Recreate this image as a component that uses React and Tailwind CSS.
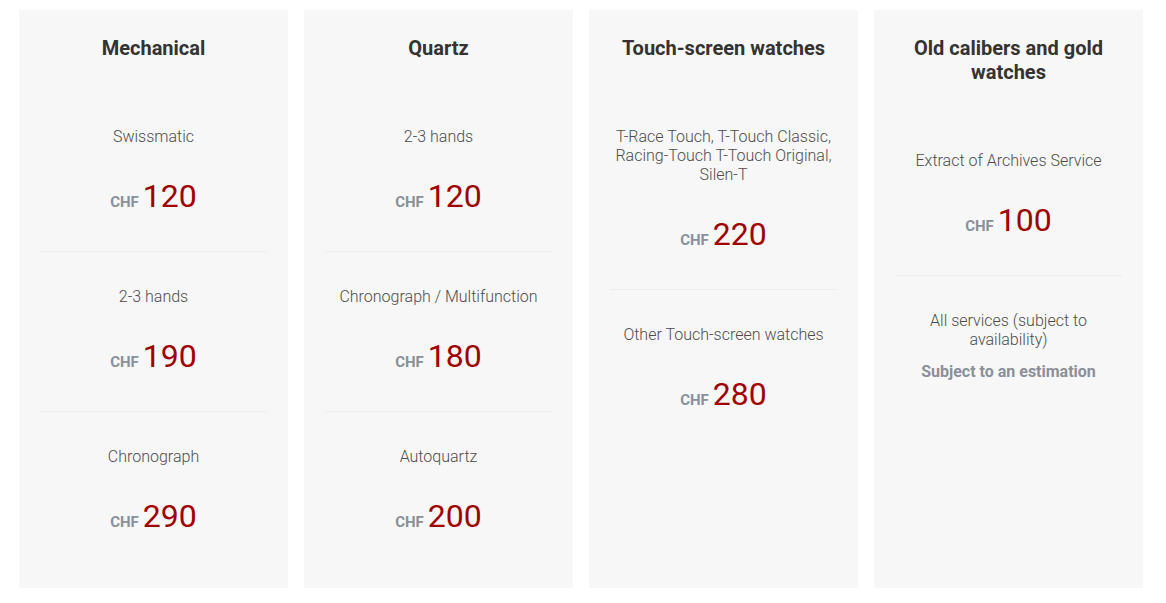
const columns = [
  {
    title: "Mechanical",
    items: [
      { label: "Swissmatic", price: "120" },
      { label: "2-3 hands", price: "190" },
      { label: "Chronograph", price: "290" },
    ],
  },
  {
    title: "Quartz",
    items: [
      { label: "2-3 hands", price: "120" },
      { label: "Chronograph / Multifunction", price: "180" },
      { label: "Autoquartz", price: "200" },
    ],
  },
  {
    title: "Touch-screen watches",
    items: [
      { label: "T-Race Touch, T-Touch Classic, Racing-Touch T-Touch Original, Silen-T", price: "220" },
      { label: "Other Touch-screen watches", price: "280" },
    ],
  },
  {
    title: "Old calibers and gold watches",
    items: [
      { label: "Extract of Archives Service", price: "100" },
      { label: "All services (subject to availability)", note: "Subject to an estimation" },
    ],
  },
];

function Item({ item, first }) {
  return (
    <div className={`pt-[35px] pb-[30px] ${first ? "" : "border-t border-[#ececec]"}`}>
      <p className="text-[16px] leading-[19px] font-light text-[#4d4d4d]">{item.label}</p>
      {item.price && (
        <div className="mt-[31px] leading-[38px]">
          <span className="text-[15px] font-bold text-[#8a9099]">CHF</span>{" "}
          <span className="text-[32px] text-[#a10000]">{item.price}</span>
        </div>
      )}
      {item.note && (
        <p className="mt-[13px] text-[16px] leading-[19px] font-bold text-[#8a9099]">{item.note}</p>
      )}
    </div>
  );
}

export default function App() {
  return (
    <div className="w-[1166px] h-[603px] bg-white pt-[10px] px-[19px] flex gap-4 font-['Roboto',sans-serif]">
      {columns.map((col) => (
        <div key={col.title} className="w-[269px] h-[578px] bg-[#f7f7f7] px-[21px] pt-[26px] text-center">
          <h3 className="text-[20px] leading-[24px] font-bold text-[#333] mb-[32px]">{col.title}</h3>
          {col.items.map((item, i) => (
            <Item key={item.label} item={item} first={i === 0} />
          ))}
        </div>
      ))}
    </div>
  );
}
